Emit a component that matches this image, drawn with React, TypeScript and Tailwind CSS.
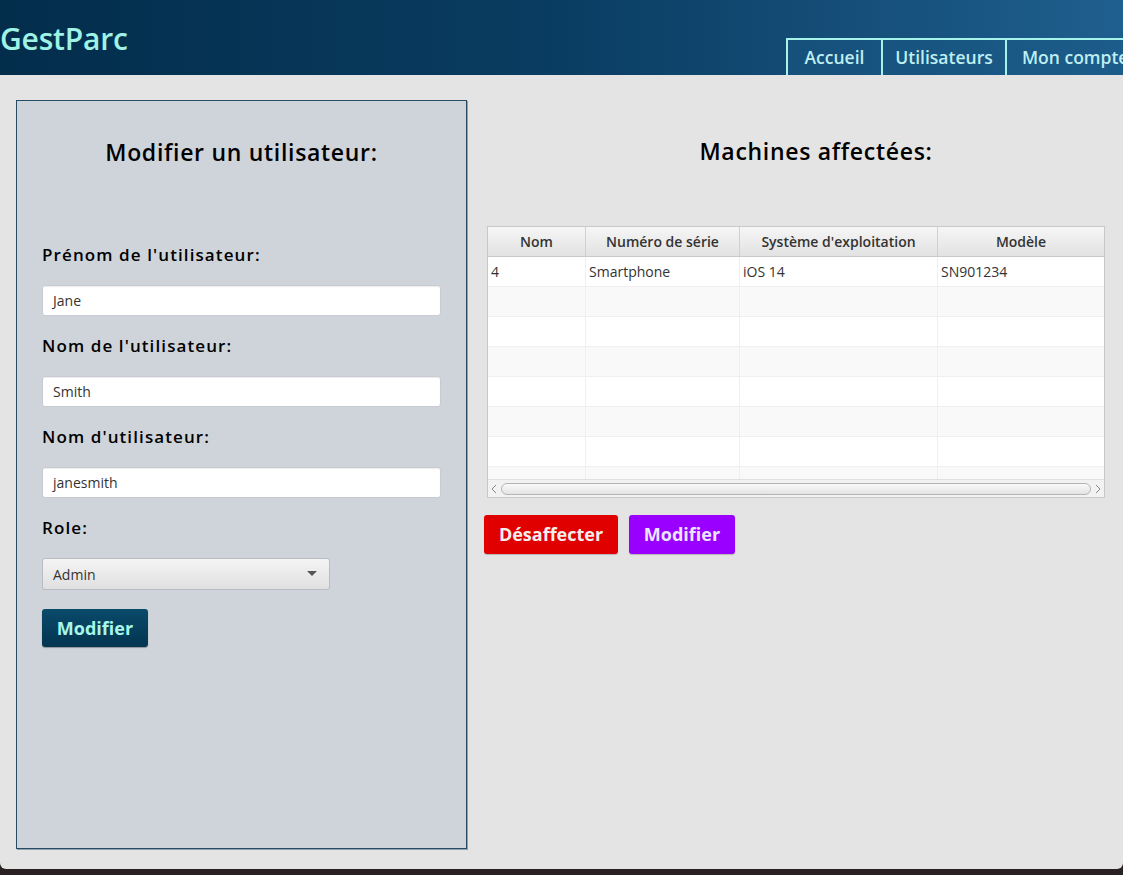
import React from "react";

const font = { fontFamily: '"Open Sans", "Noto Sans", sans-serif' } as const;

function Label({ children }: { children: React.ReactNode }) {
  return (
    <div className="h-[30px] flex items-center text-[17px] font-semibold text-black tracking-[1.1px] whitespace-nowrap">{children}</div>
  );
}

function Field({ label, value }: { label: string; value: string }) {
  return (
    <div className="flex flex-col">
      <Label>{label}</Label>
      <div className="mt-[15px] h-[31px] w-[399px] rounded-[3px] bg-white border border-[#c8ccd2] shadow-[inset_0_1px_1px_rgba(0,0,0,0.08)] flex items-center px-[10px] text-[14px] text-[#333]">
        {value}
      </div>
    </div>
  );
}

const cols = [
  { name: "Nom", w: 98 },
  { name: "Numéro de série", w: 154 },
  { name: "Système d'exploitation", w: 198 },
  { name: "Modèle", w: 166 },
];

export default function App() {
  const rows = [["4", "Smartphone", "iOS 14", "SN901234"], ...Array.from({ length: 7 }, () => ["", "", "", ""])];
  return (
    <div className="w-[1123px] h-[875px] bg-[#2a2222] overflow-hidden" style={font}>
      <div className="h-[869px] bg-[#e4e4e4] rounded-b-[6px] flex flex-col overflow-hidden">
        {/* Header */}
        <div className="h-[75px] shrink-0 bg-gradient-to-r from-[#032d4b] via-[#0a3d62] to-[#1f5f8f] flex items-start overflow-hidden">
          <div className="w-[786px] shrink-0 pt-[21px] text-[30px] leading-[36px] font-semibold text-[#9ef3e6] tracking-[-0.2px]">GestParc</div>
          <div className="flex self-end shrink-0">
            {["Accueil", "Utilisateurs", "Mon compte"].map((t, i) => (
              <div
                key={t}
                className={
                  "h-[37px] border-2 border-b-0 border-[#a6f3ea] flex items-center text-[17.5px] font-semibold text-[#bfeef2] bg-[#1a5b84]/40 whitespace-nowrap " +
                  (i === 0 ? "w-[97px] justify-center" : i === 1 ? "w-[126px] -ml-[2px] justify-center" : "w-[140px] -ml-[2px] pl-[15px]")
                }
              >
                {t}
              </div>
            ))}
          </div>
        </div>

        {/* Body */}
        <div className="flex pt-[25px] pl-[16px]">
          {/* Left panel */}
          <div className="w-[451px] h-[749px] bg-[#cfd4db] border border-[#274b63] shadow-[1px_1px_0_#8fa0ae] flex flex-col px-[25px]">
            <div className="text-center text-[23px] font-semibold text-black mt-[35px] h-[32px] leading-[32px] tracking-[0.7px]">
              Modifier un utilisateur:
            </div>
            <div className="mt-[72px] flex flex-col gap-[15px]">
              <Field label="Prénom de l'utilisateur:" value="Jane" />
              <Field label="Nom de l'utilisateur:" value="Smith" />
              <Field label="Nom d'utilisateur:" value="janesmith" />
              <div className="flex flex-col">
                <Label>Role:</Label>
                <div className="mt-[15px] h-[32px] w-[288px] rounded-[3px] bg-gradient-to-b from-[#f4f4f4] to-[#e0e0e0] border border-[#b9bcc0] flex items-center justify-between px-[10px] text-[14px] text-[#333]">
                  <span>Admin</span>
                  <svg width="10" height="6" viewBox="0 0 10 6" className="mr-[2px]">
                    <path d="M0 0 L10 0 L5 5 Z" fill="#555" />
                  </svg>
                </div>
              </div>
            </div>
            <div className="mt-[19px]">
              <div className="inline-flex items-center justify-center w-[106px] h-[38px] rounded-[3px] bg-gradient-to-b from-[#0a4a6a] to-[#033550] shadow-[0_1px_1px_rgba(0,0,0,0.3)] text-[18px] font-bold text-[#a6f6ea]">
                Modifier
              </div>
            </div>
          </div>

          {/* Right side */}
          <div className="flex-1 flex flex-col pl-[18px] pr-[18px]">
            <div className="text-center text-[23px] font-semibold text-black mt-[35px] h-[32px] leading-[32px] tracking-[0.7px] pl-[42px]">
              Machines affectées:
            </div>
            <div className="mt-[59px] ml-[2px] w-[618px] border border-[#c9c9c9] bg-white">
              <div className="flex h-[30px] bg-gradient-to-b from-[#f6f6f6] to-[#e2e2e2] border-b border-[#c9c9c9]">
                {cols.map((c, i) => (
                  <div
                    key={c.name}
                    style={{ width: c.w }}
                    className={"flex items-center justify-center text-[14px] font-semibold text-[#333] " + (i < 3 ? "border-r border-[#d0d0d0]" : "")}
                  >
                    {c.name}
                  </div>
                ))}
              </div>
              <div className="h-[222px] overflow-hidden">
                {rows.map((r, ri) => (
                  <div key={ri} className={"flex h-[30px] " + (ri % 2 === 0 ? "bg-white" : "bg-[#f9f9f9]")}>
                    {r.map((cell, ci) => (
                      <div
                        key={ci}
                        style={{ width: cols[ci].w }}
                        className={"flex items-center px-[3px] text-[14px] text-[#333] border-b border-[#efefef] " + (ci < 3 ? "border-r border-[#ececec]" : "")}
                      >
                        {cell}
                      </div>
                    ))}
                  </div>
                ))}
              </div>
              <div className="h-[18px] bg-[#f2f2f2] border-t border-[#e0e0e0] flex items-center px-[2px] gap-[3px]">
                <svg width="8" height="10" viewBox="0 0 8 10"><path d="M6 1 L2 5 L6 9" stroke="#888" fill="none" strokeWidth="1" /></svg>
                <div className="flex-1 h-[12px] rounded-[6px] border border-[#b5b5b5] bg-gradient-to-b from-[#fafafa] to-[#e3e3e3]" />
                <svg width="8" height="10" viewBox="0 0 8 10"><path d="M2 1 L6 5 L2 9" stroke="#888" fill="none" strokeWidth="1" /></svg>
              </div>
            </div>
            <div className="mt-[17px] -ml-[1px] flex gap-[11px]">
              <div className="w-[134px] h-[39px] rounded-[3px] bg-[#e00000] flex items-center justify-center text-[18px] font-bold text-[#f3eeee] shadow-[0_1px_1px_rgba(0,0,0,0.2)]">
                Désaffecter
              </div>
              <div className="w-[106px] h-[39px] rounded-[3px] bg-[#9900ff] flex items-center justify-center text-[18px] font-bold text-[#eae6ff] shadow-[0_1px_1px_rgba(0,0,0,0.2)]">
                Modifier
              </div>
            </div>
          </div>
        </div>
      </div>
    </div>
  );
}
